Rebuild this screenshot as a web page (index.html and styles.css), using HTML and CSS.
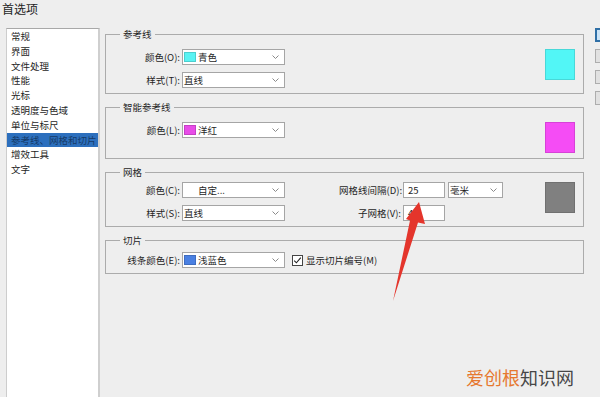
FILE: index.html
```html
<!DOCTYPE html>
<html lang="zh-CN">
<head>
    <meta charset="UTF-8">
    <meta name="viewport" content="width=device-width, initial-scale=1.0">
    <title>首选项</title>
    <link rel="stylesheet" href="styles.css">
</head>
<body>
    <div class="titlebar">首选项</div>

    <div class="main">
        <ul class="nav-list">
            <li>常规</li>
            <li>界面</li>
            <li>文件处理</li>
            <li>性能</li>
            <li>光标</li>
            <li>透明度与色域</li>
            <li>单位与标尺</li>
            <li class="active">参考线、网格和切片</li>
            <li>增效工具</li>
            <li>文字</li>
        </ul>

        <div class="content">
            <fieldset class="group">
                <legend>参考线</legend>
                <div class="group-body">
                    <div class="fields">
                        <label>颜色(O):</label>
                        <div class="select"><span class="chip chip-cyan"></span>青色<svg class="chevron" width="7" height="4" viewBox="0 0 7 4"><polyline points="0.5,0.5 3.5,3.5 6.5,0.5"/></svg></div>
                        <label>样式(T):</label>
                        <div class="select">直线<svg class="chevron" width="7" height="4" viewBox="0 0 7 4"><polyline points="0.5,0.5 3.5,3.5 6.5,0.5"/></svg></div>
                    </div>
                    <div class="swatch swatch-cyan"></div>
                </div>
            </fieldset>

            <fieldset class="group">
                <legend>智能参考线</legend>
                <div class="group-body">
                    <div class="fields">
                        <label>颜色(L):</label>
                        <div class="select"><span class="chip chip-magenta"></span>洋红<svg class="chevron" width="7" height="4" viewBox="0 0 7 4"><polyline points="0.5,0.5 3.5,3.5 6.5,0.5"/></svg></div>
                    </div>
                    <div class="swatch swatch-magenta"></div>
                </div>
            </fieldset>

            <fieldset class="group">
                <legend>网格</legend>
                <div class="group-body group-body-tight">
                    <div class="fields">
                        <label>颜色(C):</label>
                        <div class="select"><span class="chip chip-none"></span>自定...<svg class="chevron" width="7" height="4" viewBox="0 0 7 4"><polyline points="0.5,0.5 3.5,3.5 6.5,0.5"/></svg></div>
                        <label>样式(S):</label>
                        <div class="select">直线<svg class="chevron" width="7" height="4" viewBox="0 0 7 4"><polyline points="0.5,0.5 3.5,3.5 6.5,0.5"/></svg></div>
                    </div>
                    <div class="fields fields-grid">
                        <label>网格线间隔(D):</label>
                        <div class="textbox">25</div>
                        <div class="select">毫米<svg class="chevron" width="7" height="4" viewBox="0 0 7 4"><polyline points="0.5,0.5 3.5,3.5 6.5,0.5"/></svg></div>
                        <label>子网格(V):</label>
                        <div class="textbox">4</div>
                    </div>
                    <div class="swatch swatch-gray"></div>
                </div>
            </fieldset>

            <fieldset class="group">
                <legend>切片</legend>
                <div class="group-body group-body-slice">
                    <div class="fields">
                        <label>线条颜色(E):</label>
                        <div class="select"><span class="chip chip-blue"></span>浅蓝色<svg class="chevron" width="7" height="4" viewBox="0 0 7 4"><polyline points="0.5,0.5 3.5,3.5 6.5,0.5"/></svg></div>
                    </div>
                    <div class="check">
                        <svg width="11" height="11" viewBox="0 0 11 11"><rect x="0.5" y="0.5" width="10" height="10" fill="#fff" stroke="#444"/><polyline points="2.2,5.6 4.4,7.8 8.8,2.6" fill="none" stroke="#222" stroke-width="1.1"/></svg>
                        <span>显示切片编号(M)</span>
                    </div>
                </div>
            </fieldset>
        </div>

        <div class="side-buttons">
            <div class="side-btn side-btn-default"></div>
            <div class="side-btn"></div>
            <div class="side-btn"></div>
            <div class="side-btn"></div>
        </div>
    </div>

    <!-- annotation arrow drawn over the dialog -->
    <svg class="arrow" width="600" height="397" viewBox="0 0 600 397">
        <polygon points="419,202 425,224 418,222.5 393,301 410,220.5 406,219"/>
    </svg>

    <div class="watermark"><span class="wm-orange">爱创根</span>知识网</div>
</body>
</html>
```

FILE: styles.css
```css
body {
    margin: 0;
    width: 600px;
    height: 397px;
    overflow: hidden;
    position: relative;
    background-color: #eeeeee;
    color: #1e1e1e;
    font-family: "Noto Sans CJK SC", sans-serif;
}

.titlebar {
    height: 28px;
    padding-left: 2px;
    font-size: 12px;
    line-height: 18px;
}

.main {
    display: flex;
    height: 369px;
}

.nav-list {
    list-style-type: none;
    margin: 0 0 0 6px;
    padding: 0;
    width: 91px;
    flex: none;
    background-color: #fff;
    border-top: 1px solid #a8a8a8;
    border-left: 1px solid #cdcdcd;
    border-right: 2px solid #cfcfcf;
    font-size: 9.5px;
}

.nav-list li {
    height: 14.8px;
    line-height: 14.8px;
    padding-left: 4px;
    white-space: nowrap;
}

.nav-list li.active {
    background-color: #2c6fbd;
    color: #163a66;
}

.content {
    flex: none;
    width: 479px;
    margin-left: 5px;
    display: flex;
    flex-direction: column;
    gap: 7px;
}

.group {
    margin: 0;
    padding: 0 0 5px;
    min-width: 0;
    border: 1px solid #ababab;
    font-size: 9.5px;
}

.group legend {
    margin-left: 14px;
    padding: 0 3px;
    line-height: 12px;
}

.group-body {
    display: flex;
    align-items: flex-start;
    padding-top: 9px;
}

.group-body-tight {
    padding-top: 4px;
}

.group-body-slice {
    padding-top: 6px;
}

.fields {
    display: grid;
    grid-template-columns: 74px 103px;
    column-gap: 2px;
    row-gap: 7px;
    align-items: center;
}

.fields label {
    text-align: right;
    white-space: nowrap;
}

.fields-grid {
    margin-left: 54px;
    grid-template-columns: 62px 42px 56px;
}

.fields-grid .select {
    margin-left: 1px;
}

.select,
.textbox {
    height: 16px;
    box-sizing: border-box;
    background-color: #fff;
    border: 1px solid #a5a5a5;
    display: flex;
    align-items: center;
    padding-left: 1px;
    white-space: nowrap;
}

.textbox {
    padding-left: 4px;
}

.chevron {
    margin-left: auto;
    margin-right: 5px;
    fill: none;
    stroke: #8a8a8a;
    stroke-width: 1;
}

.chip {
    width: 12px;
    height: 10px;
    margin-right: 2px;
    box-sizing: border-box;
    border: 1px solid rgba(0, 0, 0, 0.15);
}

.chip-cyan { background-color: #5af3f3; }
.chip-magenta { background-color: #e84ce8; }
.chip-blue { background-color: #4a80e2; }
.chip-none { border: none; }

.swatch {
    width: 30px;
    height: 31px;
    margin-left: auto;
    margin-right: 8px;
    box-sizing: border-box;
    border: 1px solid rgba(0, 0, 0, 0.12);
}

.swatch-cyan { background-color: #52f6f6; }
.swatch-magenta { background-color: #f54cf5; }
.swatch-gray { background-color: #808080; }

.check {
    display: flex;
    align-items: center;
    gap: 3px;
    margin-left: 7px;
    height: 16px;
}

/* dialog buttons, cut off by the right edge of the screenshot */
.side-buttons {
    flex: none;
    width: 5px;
    margin-left: 11px;
    display: flex;
    flex-direction: column;
    gap: 7px;
}

.side-btn {
    height: 14px;
    box-sizing: border-box;
    background-color: #e1e1e1;
    border: 1px solid #adadad;
    border-right: none;
}

.side-btn-default {
    background-color: #cce4f7;
    border: 2px solid #2f6fa6;
    border-right: none;
}

.arrow {
    position: absolute;
    left: 0;
    top: 0;
    fill: #e4352c;
}

.watermark {
    position: absolute;
    left: 466px;
    top: 364px;
    font-size: 18px;
    line-height: 26px;
    color: #474747;
}

.wm-orange {
    color: #e6782f;
}
```
